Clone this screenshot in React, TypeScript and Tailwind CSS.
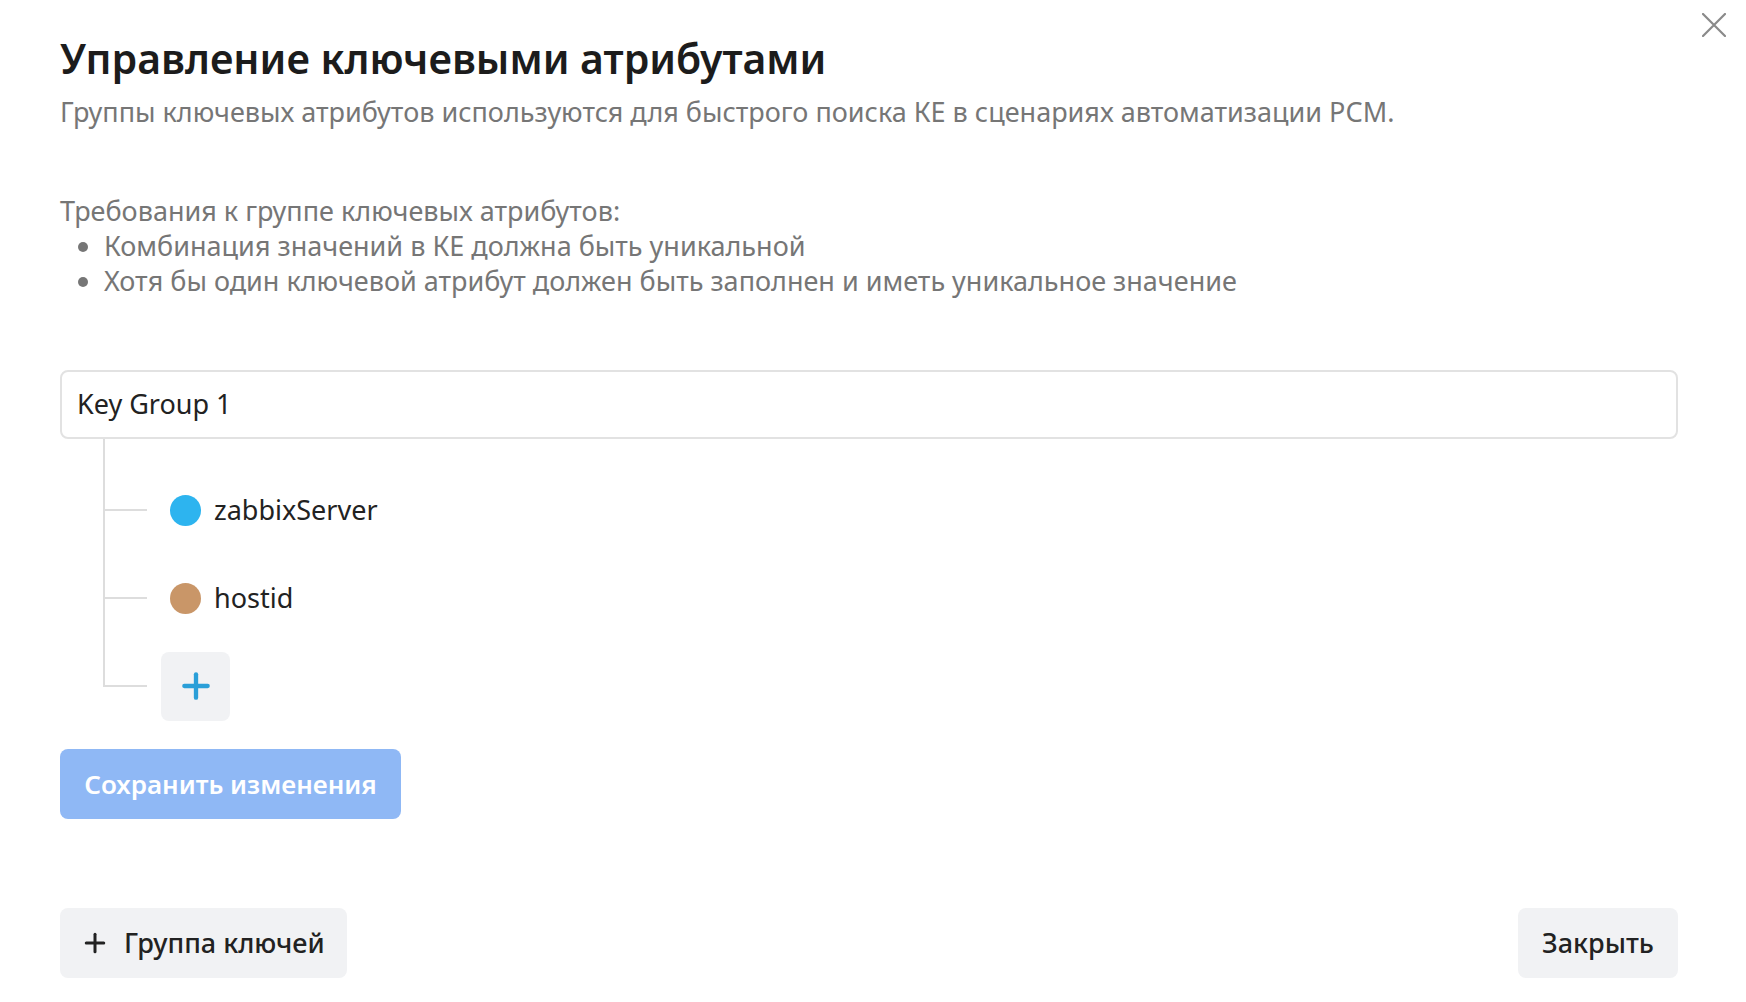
import { Plus } from "lucide-react";

interface KeyAttr {
  id: string;
  name: string;
  color: string;
}

const attrs: KeyAttr[] = [
  { id: "1", name: "zabbixServer", color: "bg-[#2db4ef]" },
  { id: "2", name: "hostid", color: "bg-[#c99668]" },
];

const Connector = ({ last }: { last?: boolean }) => (
  <div className="w-[44px] self-stretch flex flex-col shrink-0">
    <div className="flex-1 border-l-2 border-b-2 border-[#dddddd]" />
    <div className={last ? "flex-1" : "flex-1 border-l-2 border-[#dddddd]"} />
  </div>
);

const App = () => {
  return (
    <div
      className="relative w-full h-[1002px] bg-white text-[#222222]"
      style={{ fontFamily: '"Noto Sans", "Open Sans", sans-serif' }}
    >
      <button className="absolute right-[20px] top-[13px] text-[#8a8a8a]">
        <svg width="24" height="24" viewBox="0 0 24 24" fill="none" stroke="currentColor" strokeWidth="2.2" strokeLinecap="round">
          <path d="M1 1 L23 23 M23 1 L1 23" />
        </svg>
      </button>

      <div className="pl-[60px] pr-[68px] pt-[33px]">
        <h1 className="text-[41px] leading-[50px] font-semibold text-[#1c1c1c]">
          Управление ключевыми атрибутами
        </h1>
        <p className="mt-[12px] text-[27px] leading-[34px] text-[#767676]">
          Группы ключевых атрибутов используются для быстрого поиска КЕ в сценариях автоматизации РСМ.
        </p>

        <div className="mt-[64px] text-[27px] leading-[35px] text-[#767676]">
          <p>Требования к группе ключевых атрибутов:</p>
          <ul className="list-disc pl-[44px]">
            <li>Комбинация значений в КЕ должна быть уникальной</li>
            <li>Хотя бы один ключевой атрибут должен быть заполнен и иметь уникальное значение</li>
          </ul>
        </div>

        <div className="mt-[72px] h-[69px] rounded-[8px] border-2 border-[#e2e2e2] flex items-center px-[15px] text-[27px] text-[#222222]">
          Key Group 1
        </div>

        <div className="ml-[43px] flex flex-col">
          <div className="h-[27px] border-l-2 border-[#dddddd]" />
          {attrs.map((a) => (
            <div key={a.id} className="h-[88px] flex items-center">
              <Connector />
              <span className={`ml-[23px] w-[31px] h-[31px] rounded-full ${a.color}`} />
              <span className="ml-[13px] text-[27px] text-[#222222]">{a.name}</span>
            </div>
          ))}
          <div className="h-[88px] flex items-center">
            <Connector last />
            <button className="ml-[14px] w-[69px] h-[69px] rounded-[8px] bg-[#f1f2f4] flex items-center justify-center text-[#2a9fd8]">
              <Plus className="w-[40px] h-[40px]" strokeWidth={2.6} />
            </button>
          </div>
        </div>

        <button className="mt-[19px] w-[341px] h-[70px] rounded-[8px] bg-[#8fb8f5] text-white text-[26px] font-semibold">
          Сохранить изменения
        </button>

        <div className="mt-[89px] flex items-center justify-between">
          <button className="h-[70px] w-[287px] rounded-[8px] bg-[#f1f2f4] flex items-center pl-[20px] text-[27px] font-medium text-[#222222]">
            <Plus className="w-[30px] h-[30px]" strokeWidth={2.4} />
            <span className="ml-[14px]">Группа ключей</span>
          </button>
          <button className="h-[70px] w-[160px] rounded-[8px] bg-[#f1f2f4] text-[27px] font-medium text-[#222222]">
            Закрыть
          </button>
        </div>
      </div>
    </div>
  );
};

export default App;
